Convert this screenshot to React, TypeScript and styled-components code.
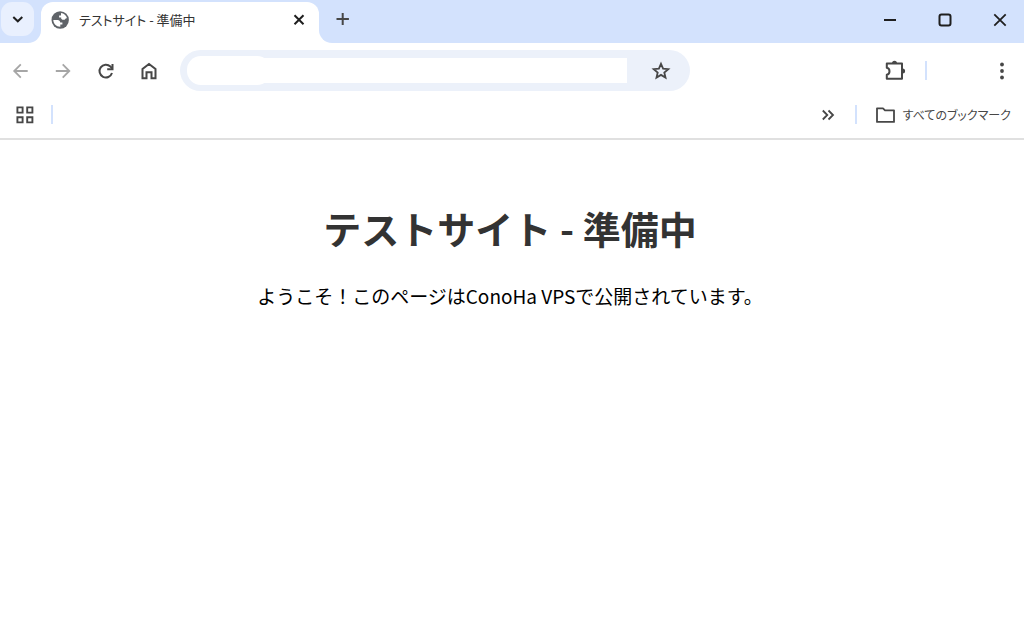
import React from "react";
import styled, { createGlobalStyle } from "styled-components";

const colors = {
  frame: "#d3e2fd",
  frameButton: "#e9f0fe",
  field: "#ecf1fa",
  ink: "#474747",
  faded: "#a6a6a6",
  dark: "#1f1f1f",
};

const GlobalStyle = createGlobalStyle`
  * { box-sizing: border-box; }
  body {
    margin: 0;
    background: #fff;
    font-family: "Noto Sans CJK JP", sans-serif;
  }
  button, input { font: inherit; }
`;

const Browser = styled.div`
  display: flex;
  flex-direction: column;
  min-height: 100vh;
`;

const TabStrip = styled.header`
  display: flex;
  height: 43px;
  background: #fff;
`;

const TabSearch = styled.div`
  flex: none;
  width: 41px;
  padding: 2px 0 0 1px;
  background: ${colors.frame};
  border-bottom-right-radius: 13px;
`;

const IconButton = styled.button<{ $w?: number; $h?: number; $color?: string }>`
  flex: none;
  display: flex;
  align-items: center;
  justify-content: center;
  width: ${(p) => p.$w ?? 43}px;
  height: ${(p) => p.$h ?? 34}px;
  padding: 0;
  border: 0;
  background: transparent;
  color: ${(p) => p.$color ?? colors.ink};
`;

const TabSearchButton = styled(IconButton)`
  border-radius: 11px;
  background: ${colors.frameButton};
`;

const TabSlot = styled.div`
  flex: 0 1 278px;
  min-width: 0;
  padding-top: 2px;
  background: ${colors.frame};
`;

const Tab = styled.div`
  display: flex;
  align-items: center;
  height: 41px;
  padding: 0 5px 6px 10px;
  border-radius: 12px 12px 0 0;
  background: #fff;
`;

const TabTitle = styled.span`
  flex: 1;
  min-width: 0;
  margin-left: 10px;
  overflow: hidden;
  white-space: nowrap;
  font-size: 13px;
  line-height: 20px;
  font-feature-settings: "palt";
  color: #333;
`;

const StripRest = styled.div`
  flex: 1;
  display: flex;
  justify-content: space-between;
  padding: 2px 0 0 2px;
  border-bottom-left-radius: 13px;
  background: ${colors.frame};
`;

const WindowControls = styled.div`
  display: flex;
  margin-right: -3px;
`;

const Toolbar = styled.nav`
  display: flex;
  align-items: center;
  height: 55px;
`;

const AddressBar = styled.form`
  flex: 1;
  display: flex;
  align-items: center;
  height: 41px;
  margin: 0 183px 0 10px;
  padding: 0 7px;
  border-radius: 21px;
  background: ${colors.field};
`;

const SiteInfo = styled.button`
  width: 84px;
  height: 29px;
  padding: 0;
  border: 0;
  border-radius: 14px;
  background: #fff;
`;

const AddressInput = styled.input`
  flex: 1;
  min-width: 0;
  height: 25px;
  margin: 0 12px 0 -16px;
  padding: 0 8px;
  border: 0;
  outline: 0;
  background: #fff;
`;

const Divider = styled.span`
  flex: none;
  width: 2px;
  height: 19px;
  background: ${colors.frame};
`;

const MenuSlot = styled.div`
  display: flex;
  justify-content: flex-end;
  width: 99px;
  margin-left: 9px;
`;

const BookmarksBar = styled.nav`
  display: flex;
  align-items: center;
  height: 42px;
  padding: 0 13px 7px 3px;
  border-bottom: 2px solid #e0e0e0;
`;

const BookmarkGroup = styled.div`
  display: flex;
  align-items: center;
  gap: 5px;
  flex: 1;
`;

const Spacer = styled.span`
  flex: 1;
`;

const AllBookmarks = styled.button`
  display: flex;
  align-items: center;
  gap: 8px;
  margin-left: 18px;
  padding: 0;
  border: 0;
  background: transparent;
  color: ${colors.ink};
  font-size: 12px;
  line-height: 20px;
  font-feature-settings: "palt";
  white-space: nowrap;
`;

const Page = styled.main`
  padding: 60px 20px 60px 16px;
  text-align: center;
`;

const Title = styled.h1`
  margin: 0;
  font-size: 38px;
  line-height: 56px;
  font-weight: 700;
  color: #333;
`;

const Message = styled.p`
  margin: 26px 0 0;
  font-size: 19px;
  line-height: 28px;
  color: #000;
`;

type IconProps = { size?: number; stroke?: number; children: React.ReactNode };

const Icon = ({ size = 20, stroke = 2, children }: IconProps) => (
  <svg
    width={size}
    height={size}
    viewBox={`0 0 ${size} ${size}`}
    fill="none"
    stroke="currentColor"
    strokeWidth={stroke}
    aria-hidden="true"
  >
    {children}
  </svg>
);

const Globe = () => (
  <svg width="18" height="18" viewBox="0 0 18 18" aria-hidden="true">
    <circle cx="9.2" cy="9" r="8.7" fill="#5f6368" />
    <path
      fill="#fff"
      d="M10 2.1C13 2.4 15.4 4.5 16 7.2H15L13.6 8.8H11.4L10.2 7.7V6.4H8.1V4.4H10Z M2.3 9.1H6.6C8.2 9.1 9.2 10.1 9.2 11.4H11.4V13.4H9.3V15.8C5.4 15.9 2.4 12.9 2.3 9.1Z"
    />
  </svg>
);

export default function App() {
  return (
    <>
      <GlobalStyle />
      <Browser>
        <TabStrip>
          <TabSearch>
            <TabSearchButton $w={33} $h={34} $color={colors.dark} aria-label="タブを検索">
              <Icon><path d="M5.3 8 9.8 12.3 14.3 8" /></Icon>
            </TabSearchButton>
          </TabSearch>
          <TabSlot>
            <Tab>
              <Globe />
              <TabTitle>テストサイト - 準備中</TabTitle>
              <IconButton $w={30} $color={colors.dark} aria-label="タブを閉じる">
                <Icon><path d="m5.5 5.2 9 9m0-9-9 9" /></Icon>
              </IconButton>
            </Tab>
          </TabSlot>
          <StripRest>
            <IconButton aria-label="新しいタブ">
              <Icon><path d="M9.7 4v12M3.5 10h12.4" /></Icon>
            </IconButton>
            <WindowControls>
              <IconButton $w={55} $h={36} $color={colors.dark} aria-label="最小化">
                <Icon><path d="M4 10h12" /></Icon>
              </IconButton>
              <IconButton $w={55} $h={36} $color={colors.dark} aria-label="最大化">
                <Icon><rect x="4.5" y="4.5" width="11" height="11" rx="2" /></Icon>
              </IconButton>
              <IconButton $w={55} $h={36} $color={colors.dark} aria-label="閉じる">
                <Icon stroke={1.8}><path d="m4.3 4.3 11.4 11.4m0-11.4L4.3 15.7" /></Icon>
              </IconButton>
            </WindowControls>
          </StripRest>
        </TabStrip>

        <Toolbar aria-label="ツールバー">
          <IconButton $w={41} $color={colors.faded} aria-label="戻る">
            <Icon stroke={1.8}><path d="M16.7 10H3.4M9.8 3.4 3.2 10l6.6 6.6" /></Icon>
          </IconButton>
          <IconButton $color={colors.faded} aria-label="進む">
            <Icon stroke={1.8}><path d="M2.8 10h13.3M9.7 3.4l6.6 6.6-6.6 6.6" /></Icon>
          </IconButton>
          <IconButton aria-label="再読み込み">
            <Icon>
              <path d="M16 12A6.4 6.4 0 1 1 14.4 5.5L16.4 7.6" />
              <path d="M16.5 3V8.3H11.2" />
            </Icon>
          </IconButton>
          <IconButton aria-label="ホーム">
            <Icon>
              <path d="M3.5 17.3V7.9L10 2.9 16.5 7.9V17.3H12.5V11.3H7.5V17.3Z" />
            </Icon>
          </IconButton>
          <AddressBar onSubmit={(e) => e.preventDefault()}>
            <SiteInfo type="button" aria-label="サイト情報" />
            <AddressInput aria-label="アドレス" />
            <IconButton $w={44} type="button" aria-label="ブックマークに追加">
              <Icon stroke={1.8}>
                <path d="M10 2.8 12.1 7.6 17.3 8.1 13.3 11.5 14.5 16.6 10 13.9 5.5 16.6 6.7 11.5 2.7 8.1 7.9 7.6Z" />
              </Icon>
            </IconButton>
          </AddressBar>
          <IconButton aria-label="拡張機能">
            <Icon size={22}>
              <path
                strokeLinejoin="round"
                d="M2.8 3.6H18V18.8H2.8V14.7C6.4 14 6.4 8.4 2.8 7.7Z"
              />
              <path
                fill="currentColor"
                stroke="none"
                d="M8 3.2a2.5 2.5 0 0 1 5 0ZM18.6 8.6a2.5 2.5 0 0 1 0 5Z"
              />
            </Icon>
          </IconButton>
          <MenuSlot>
            <Divider />
            <Spacer />
            <IconButton $w={45} $h={19} aria-label="メニュー">
              <Icon>
                <g fill="currentColor" stroke="none">
                  <circle cx="10" cy="3.5" r="1.9" />
                  <circle cx="10" cy="10" r="1.9" />
                  <circle cx="10" cy="16.5" r="1.9" />
                </g>
              </Icon>
            </IconButton>
          </MenuSlot>
        </Toolbar>

        <BookmarksBar aria-label="ブックマーク">
          <BookmarkGroup>
            <IconButton aria-label="タブグループ">
              <Icon stroke={1.9}>
                <path d="M2.4 2.4h5.2v5.2H2.4zM12.2 2.4h5.2v5.2h-5.2zM2.4 12.2h5.2v5.2H2.4zM12.2 12.2h5.2v5.2h-5.2z" />
              </Icon>
            </IconButton>
            <Divider />
          </BookmarkGroup>
          <IconButton $w={54} aria-label="その他のブックマーク">
            <Icon stroke={1.8}><path d="m4.8 5.5 4.5 4.5-4.5 4.5M10.5 5.5 15 10l-4.5 4.5" /></Icon>
          </IconButton>
          <Divider />
          <AllBookmarks>
            <Icon stroke={1.8}>
              <path strokeLinejoin="round" d="M2 3.3H8L10 5.3H19V16.9H2Z" />
            </Icon>
            すべてのブックマーク
          </AllBookmarks>
        </BookmarksBar>

        <Page>
          <Title>テストサイト - 準備中</Title>
          <Message>ようこそ！このページはConoHa VPSで公開されています。</Message>
        </Page>
      </Browser>
    </>
  );
}
